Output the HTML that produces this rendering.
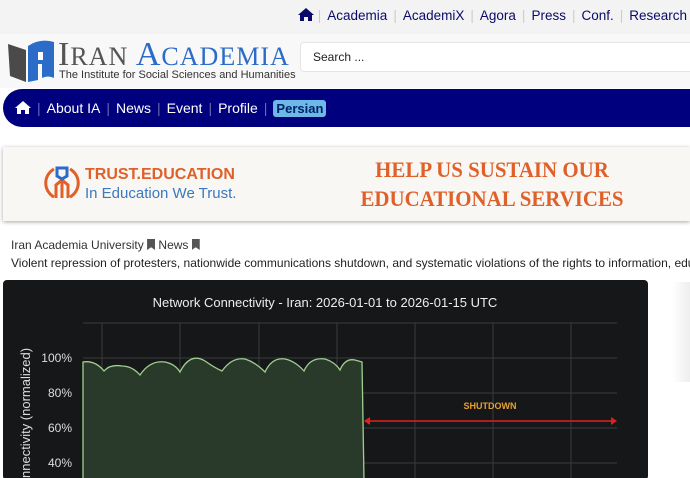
<!DOCTYPE html>
<html><head><meta charset="utf-8"><style>
*{margin:0;padding:0;box-sizing:border-box}
body{width:690px;height:478px;overflow:hidden;background:#fff;font-family:"Liberation Sans",sans-serif;position:relative}
.a{position:absolute}
.top{left:0;top:0;width:690px;height:34px;background:#f3f3f3}
.tl{top:8px;font-size:13.5px;color:#0a0a6a;white-space:nowrap}
.tl span{margin:0 6px}
.tl i{font-style:normal;color:#ccc}
.hdr{left:0;top:34px;width:690px;height:54px;background:#f8f8f8}
.nav{left:3px;top:89px;width:687px;height:38px;background:#00007f;border-radius:19px 0 0 19px}
.nv{top:100px;font-size:14px;color:#fff;white-space:nowrap}
.nv i{font-style:normal;color:#6a6ab0;margin:0 6px}
</style></head><body>
<div class="a top"></div>
<div class="a tl" style="left:298px">
<svg width="16" height="13" viewBox="0 0 16 13" style="vertical-align:-1px"><path d="M8 0L0 7h2v6h4V9h4v4h4V7h2z" fill="#0a0a6a"/></svg>
<i>|</i><span>Academia</span><i>|</i><span>AcademiX</span><i>|</i><span>Agora</span><i>|</i><span>Press</span><i>|</i><span>Conf.</span><i>|</i><span>Research</span></div>
<div class="a hdr"></div>
<svg class="a" style="left:8px;top:40px" width="46" height="42" viewBox="0 0 46 42"><path d="M0 4l18 6v32L2 36z" fill="#4a4a4a"/><path d="M20 6q12-8 26-4v36q-6-3-12 0V24h-4v16l-10 2z" fill="#2a6cc8"/><rect x="30" y="12" width="5" height="8" fill="#fff"/></svg>
<div class="a" style="left:58px;top:36px;font-family:'Liberation Serif',serif;font-size:34px;letter-spacing:1px;white-space:nowrap"><span style="color:#555">I<span style="font-size:26px">RAN</span></span> <span style="color:#2a6cc8">A<span style="font-size:26px">CADEMIA</span></span></div>
<div class="a" style="left:59px;top:69px;font-size:11px;color:#333;white-space:nowrap">The Institute for Social Sciences and Humanities</div>
<div class="a" style="left:300px;top:42px;width:400px;height:30px;background:#fff;border:1px solid #e4e4e4;border-radius:4px"></div>
<div class="a" style="left:313px;top:50px;font-size:12px;color:#222">Search ...</div>
<div class="a nav"></div>
<div class="a nv" style="left:15px"><svg width="16" height="13" viewBox="0 0 16 13" style="vertical-align:-1px"><path d="M8 0L0 7h2v6h4V9h4v4h4V7h2z" fill="#fff"/></svg><i>|</i>About IA<i>|</i>News<i>|</i>Event<i>|</i>Profile<i>|</i><span style="background:#6cb8e6;color:#00206a;border-radius:3px;padding:1px 3px;font-weight:bold;font-size:13px">Persian</span></div>
<div class="a" style="left:3px;top:147px;width:687px;height:74px;background:#f8f7f3;box-shadow:0 1px 4px rgba(0,0,0,.35)"></div>
<svg class="a" style="left:44px;top:165px" width="36" height="36" viewBox="0 0 36 36" fill="none" stroke="#e0602a" stroke-width="3"><path d="M10 4A16 16 0 0 0 10 32M26 4A16 16 0 0 1 26 32M12 33V20l6-5 6 5v13M18 15v18"/><path d="M13 3h10v8l-5 3-5-3z" stroke="#2a6cc8"/></svg>
<div class="a" style="left:85px;top:166px;font-size:16px;font-weight:bold;color:#e0602a">TRUST.EDUCATION</div>
<div class="a" style="left:85px;top:185px;font-size:15px;color:#3a78c0">In Education We Trust.</div>
<div class="a" style="left:297px;top:155px;width:390px;text-align:center;font-family:'Liberation Serif',serif;font-weight:bold;font-size:22px;line-height:29px;color:#e0602a;transform:scaleX(0.95)">HELP US SUSTAIN OUR<br>EDUCATIONAL SERVICES</div>
<div class="a" style="left:11px;top:238px;font-size:12px;color:#333;white-space:nowrap">Iran Academia University <span style="display:inline-block;width:8px;height:11px;background:#555;vertical-align:-1px;clip-path:polygon(0 0,100% 0,100% 100%,50% 75%,0 100%)"></span> News <span style="display:inline-block;width:8px;height:11px;background:#555;vertical-align:-1px;clip-path:polygon(0 0,100% 0,100% 100%,50% 75%,0 100%)"></span></div>
<div class="a" style="left:11px;top:256px;width:679px;overflow:hidden;font-size:12px;color:#222;white-space:nowrap">Violent repression of protesters, nationwide communications shutdown, and systematic violations of the rights to information, education</div>
<svg class="a" style="left:3px;top:280px" width="645" height="198" viewBox="3 280 645 198">
<rect x="3" y="280" width="645" height="200" rx="4" fill="#161718"/>
<text x="325" y="307" text-anchor="middle" fill="#eee" font-size="13" font-family="Liberation Sans">Network Connectivity - Iran: 2026-01-01 to 2026-01-15 UTC</text>
<g stroke="#3a3b3d" stroke-width="1">
<line x1="83" y1="323" x2="617" y2="323"/><line x1="83" y1="358" x2="617" y2="358"/><line x1="83" y1="393" x2="617" y2="393"/><line x1="83" y1="428" x2="617" y2="428"/><line x1="83" y1="463" x2="617" y2="463"/>
<line x1="102" y1="323" x2="102" y2="478"/><line x1="180" y1="323" x2="180" y2="478"/><line x1="259" y1="323" x2="259" y2="478"/><line x1="337" y1="323" x2="337" y2="478"/><line x1="415" y1="323" x2="415" y2="478"/><line x1="493" y1="323" x2="493" y2="478"/><line x1="571" y1="323" x2="571" y2="478"/>
</g>
<path d="M83 362Q95 360 104 371Q110 364 122 366Q132 366 140 375Q150 360 165 362Q175 364 180 372Q190 352 205 361Q215 368 222 371Q232 357 245 359Q255 362 265 372Q272 357 285 359Q295 361 304 371Q310 357 325 359Q335 362 340 370Q345 358 355 360L362 362L364 480L83 480Z" fill="#2a3a2a" stroke="#9fcf8f" stroke-width="1.3"/>
<g fill="#ddd" font-size="12" font-family="Liberation Sans" text-anchor="end"><text x="72" y="362">100%</text><text x="72" y="397">80%</text><text x="72" y="432">60%</text><text x="72" y="467">40%</text></g>
<text x="30" y="478" transform="rotate(-90 30 478)" fill="#ddd" font-size="13" font-family="Liberation Sans">nnectivity (normalized)</text>
<text x="490" y="409" text-anchor="middle" fill="#e8a030" font-size="9" font-weight="bold" font-family="Liberation Sans">SHUTDOWN</text>
<line x1="366" y1="421" x2="615" y2="421" stroke="#e02020" stroke-width="1.5"/>
<path d="M364 421l6-4v8zM617 421l-6-4v8z" fill="#e02020"/>
</svg>
<div class="a" style="left:672px;top:282px;width:18px;height:100px;background:linear-gradient(90deg,#fff,#eee)"></div>
</body></html>
